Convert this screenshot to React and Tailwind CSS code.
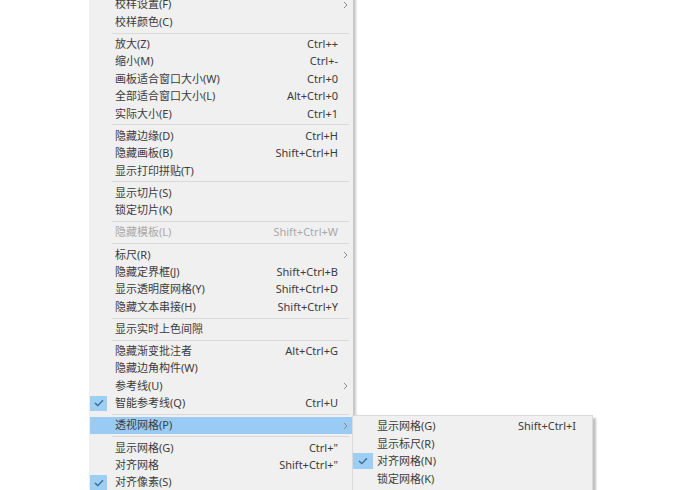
import React from 'react';

const font = { fontFamily: '"Noto Sans", "Noto Sans CJK SC", sans-serif' };

const mainItems = [
  { label: '校样设置(F)', sub: true },
  { label: '校样颜色(C)' },
  'sep',
  { label: '放大(Z)', key: 'Ctrl++' },
  { label: '缩小(M)', key: 'Ctrl+-' },
  { label: '画板适合窗口大小(W)', key: 'Ctrl+0' },
  { label: '全部适合窗口大小(L)', key: 'Alt+Ctrl+0' },
  { label: '实际大小(E)', key: 'Ctrl+1' },
  'sep',
  { label: '隐藏边缘(D)', key: 'Ctrl+H' },
  { label: '隐藏画板(B)', key: 'Shift+Ctrl+H' },
  { label: '显示打印拼贴(T)' },
  'sep',
  { label: '显示切片(S)' },
  { label: '锁定切片(K)' },
  'sep',
  { label: '隐藏模板(L)', key: 'Shift+Ctrl+W', disabled: true },
  'sep',
  { label: '标尺(R)', sub: true },
  { label: '隐藏定界框(J)', key: 'Shift+Ctrl+B' },
  { label: '显示透明度网格(Y)', key: 'Shift+Ctrl+D' },
  { label: '隐藏文本串接(H)', key: 'Shift+Ctrl+Y' },
  'sep',
  { label: '显示实时上色间隙' },
  'sep',
  { label: '隐藏渐变批注者', key: 'Alt+Ctrl+G' },
  { label: '隐藏边角构件(W)' },
  { label: '参考线(U)', sub: true },
  { label: '智能参考线(Q)', key: 'Ctrl+U', checked: true },
  'sep',
  { label: '透视网格(P)', sub: true, active: true },
  'sep',
  { label: '显示网格(G)', key: 'Ctrl+"' },
  { label: '对齐网格', key: 'Shift+Ctrl+"' },
  { label: '对齐像素(S)', checked: true },
];

const subItems = [
  { label: '显示网格(G)', key: 'Shift+Ctrl+I' },
  { label: '显示标尺(R)' },
  { label: '对齐网格(N)', checked: true },
  { label: '锁定网格(K)' },
];

function Check({ className }) {
  return (
    <div className={'flex items-center justify-center bg-[#9dcff5] ' + className}>
      <svg width="10" height="8" viewBox="0 0 10 8">
        <polyline points="1,4 3.8,6.6 9,1.2" fill="none" stroke="#3b6690" strokeWidth="1.3" />
      </svg>
    </div>
  );
}

function Chevron() {
  return (
    <svg width="5" height="8" viewBox="0 0 5 8">
      <polyline points="1,1 4,4 1,7" fill="none" stroke="#8a8a8a" strokeWidth="1" />
    </svg>
  );
}

export default function App() {
  return (
    <div className="relative h-[490px] w-[700px] overflow-hidden bg-white text-[11px] text-[#3c3c3c]" style={font}>
      <div className="ml-[89px] h-[500px] w-[264px] bg-[#f0f0f0] px-px shadow-[3px_0_2px_rgba(0,0,0,0.22)]">
        <div className="-mt-[4px]">
          {mainItems.map((it, i) =>
            it === 'sep' ? (
              <div key={i} className="flex h-[4.8px] items-center pl-[22px] pr-[3px]">
                <div className="h-px w-full bg-[#d9d9d9]" />
              </div>
            ) : (
              <div
                key={i}
                className={
                  'flex h-[17.4px] items-center ' +
                  (it.active ? 'bg-[#99cbf4] ' : '') +
                  (it.disabled ? 'text-[#a9a9a9]' : '')
                }
              >
                <div className="flex w-[25px] items-center">
                  {it.checked && <Check className="h-[15px] w-[17px]" />}
                </div>
                <div className="flex-1 whitespace-nowrap">{it.label}</div>
                <div className="whitespace-nowrap text-right">{it.key}</div>
                <div className="flex w-[14px] items-center justify-center">{it.sub && <Chevron />}</div>
              </div>
            )
          )}
        </div>
      </div>

      <div className="absolute left-[352px] top-[415px] w-[241px] border border-[#dadada] bg-[#f0f0f0] pt-[2px] pb-[4px] shadow-[3px_3px_2px_rgba(0,0,0,0.25)]">
        {subItems.map((it, i) => (
          <div key={i} className="flex h-[17.4px] items-center">
            <div className="flex w-[24px] items-center">
              {it.checked && <Check className="h-[16px] w-[20px]" />}
            </div>
            <div className="flex-1 whitespace-nowrap">{it.label}</div>
            <div className="whitespace-nowrap pr-[16px] text-right">{it.key}</div>
          </div>
        ))}
      </div>
    </div>
  );
}
